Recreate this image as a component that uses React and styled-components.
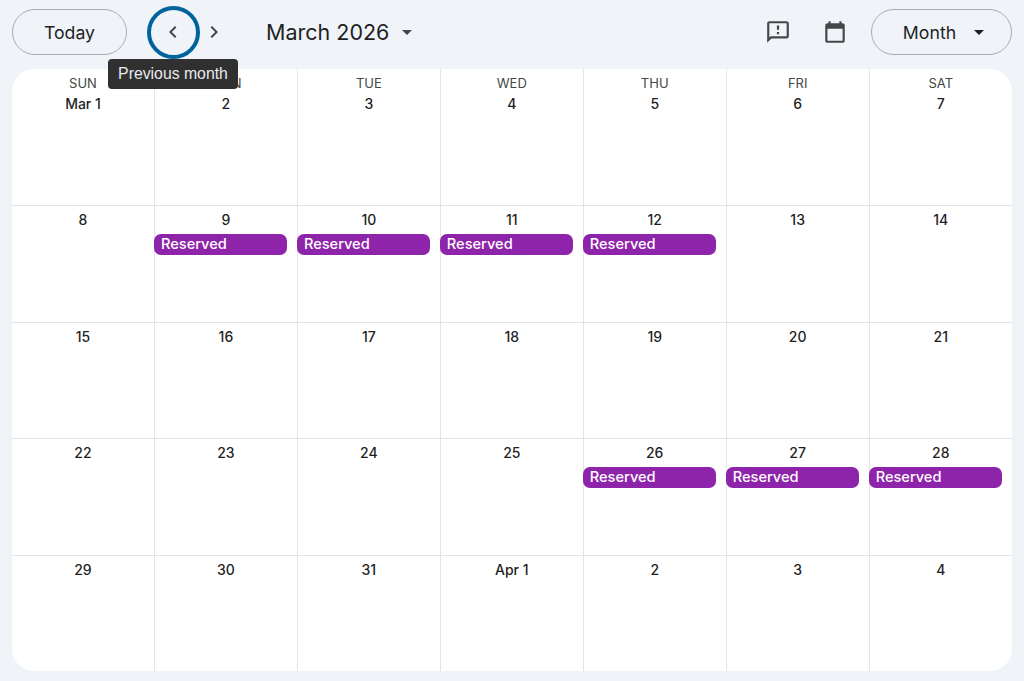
import styled, { createGlobalStyle } from "styled-components";

const WEEKDAYS = ["SUN", "MON", "TUE", "WED", "THU", "FRI", "SAT"];

const DAYS = [
  "Mar 1", "2", "3", "4", "5", "6", "7",
  "8", "9", "10", "11", "12", "13", "14",
  "15", "16", "17", "18", "19", "20", "21",
  "22", "23", "24", "25", "26", "27", "28",
  "29", "30", "31", "Apr 1", "2", "3", "4",
];

const RESERVED = [8, 9, 10, 11, 25, 26, 27];

const App = () => {
  return (
    <>
      <GlobalStyle />
      <Page>
        <Toolbar>
          <PillButton $width={115}>Today</PillButton>
          <NavGroup>
            <NavButton $focused aria-label="Previous month">
              <svg width="24" height="24" viewBox="0 0 24 24" fill="#444746">
                <path d="M15.4 7.4 14 6l-6 6 6 6 1.4-1.4-4.6-4.6z" />
              </svg>
              <Tooltip>Previous month</Tooltip>
            </NavButton>
            <NavButton aria-label="Next month">
              <svg width="24" height="24" viewBox="0 0 24 24" fill="#444746">
                <path d="M8.6 16.6 10 18l6-6-6-6-1.4 1.4 4.6 4.6z" />
              </svg>
            </NavButton>
          </NavGroup>
          <Title>
            March 2026
            <Caret $color="#444746" />
          </Title>
          <Spacer />
          <IconSlot>
            <svg width="26" height="26" viewBox="0 0 24 24" fill="#444746">
              <path d="M20 2H4c-1.1 0-2 .9-2 2v18l4-4h14c1.1 0 2-.9 2-2V4c0-1.100-.9-2-2-2zm0 14H5.170L4 17.170V4h16v12zM11 12h2v2h-2zm0-6h2v4h-2z" />
            </svg>
          </IconSlot>
          <IconSlot>
            <svg width="26" height="26" viewBox="0 0 24 24" fill="#444746">
              <path d="M19 4h-1V2h-2v2H8V2H6v2H5c-1.100 0-2 .9-2 2v14c0 1.100.9 2 2 2h14c1.100 0 2-.9 2-2V6c0-1.100-.9-2-2-2zm0 16H5V9h14v11z" />
            </svg>
          </IconSlot>
          <PillButton $width={141} $inset={4}>
            Month
            <Caret $color="#1f1f1f" $small />
          </PillButton>
        </Toolbar>
        <Calendar>
          {DAYS.map((day, i) => (
            <Cell key={i} $firstRow={i < 7}>
              {i < 7 && <Weekday>{WEEKDAYS[i]}</Weekday>}
              <DayNumber $firstRow={i < 7}>{day}</DayNumber>
              {RESERVED.includes(i) && <Reservation>Reserved</Reservation>}
            </Cell>
          ))}
        </Calendar>
      </Page>
    </>
  );
};

const GlobalStyle = createGlobalStyle`
  html, body {
    margin: 0;
    padding: 0;
    background: #f0f4f9;
  }
  body {
    font-family: Inter, Roboto, "Liberation Sans", sans-serif;
    color: #1f1f1f;
  }
  * {
    box-sizing: border-box;
  }
`;

const Page = styled.div`
  width: 1024px;
  height: 681px;
  padding: 0 12px;
  overflow: hidden;
`;

const Toolbar = styled.div`
  display: flex;
  align-items: center;
  height: 69px;
  padding-bottom: 5px;
`;

const PillButton = styled.button`
  display: flex;
  align-items: center;
  justify-content: center;
  gap: 18px;
  width: ${({ $width }) => $width}px;
  height: 46px;
  padding: 0 0 0 ${({ $inset }) => $inset || 0}px;
  background: transparent;
  border: 1px solid #a9acb0;
  border-radius: 23px;
  font-family: inherit;
  font-size: 17.700px;
  font-weight: 400;
  color: #1f1f1f;
`;

const NavGroup = styled.div`
  display: flex;
  gap: 1px;
  margin-left: 26px;
`;

const NavButton = styled.button`
  position: relative;
  display: flex;
  align-items: center;
  justify-content: center;
  width: 40px;
  height: 40px;
  padding: 0;
  background: transparent;
  border: none;

  ${({ $focused }) =>
    $focused &&
    `
    &::before {
      content: "";
      box-sizing: border-box;
      position: absolute;
      top: -6.5px;
      left: -6.5px;
      width: 53px;
      height: 53px;
      border: 4px solid #00639b;
      border-radius: 50%;
    }
  `}
`;

const Tooltip = styled.span`
  position: absolute;
  z-index: 2;
  top: 46.5px;
  left: -45px;
  width: 130px;
  height: 30px;
  background: #303030;
  border-radius: 4px;
  font-size: 15.800px;
  line-height: 30px;
  text-align: center;
  white-space: nowrap;
  color: #e8eaed;
`;

const Title = styled.div`
  display: flex;
  align-items: center;
  margin-left: 32px;
  font-size: 21.500px;
  color: #1f1f1f;
`;

const Caret = styled.span`
  width: 0;
  height: 0;
  margin-left: ${({ $small }) => ($small ? 0 : 13)}px;
  border-left: 5px solid transparent;
  border-right: 5px solid transparent;
  border-top: 5px solid ${({ $color }) => $color};
`;

const Spacer = styled.div`
  flex: 1;
`;

const IconSlot = styled.div`
  display: flex;
  align-items: center;
  justify-content: center;
  width: 40px;
  height: 40px;
  margin-right: 17px;

  &:last-of-type {
    margin-right: 16px;
  }
`;

const Calendar = styled.div`
  display: grid;
  grid-template-columns: repeat(6, 142.950px) 1fr;
  grid-template-rows: 137px 117px 116px 117px 115px;
  width: 1000px;
  background: #fff;
  border-radius: 22px;
  overflow: hidden;
`;

const Cell = styled.div`
  display: flex;
  flex-direction: column;
  align-items: center;
  padding-top: ${({ $firstRow }) => ($firstRow ? 6 : 4)}px;
  border-right: 1px solid #e2e6ec;
  border-bottom: 1px solid #e2e6ec;
  min-width: 0;

  &:nth-child(7n) {
    border-right: none;
  }
  &:nth-child(n + 29) {
    border-bottom: none;
  }
`;

const Weekday = styled.div`
  font-size: 13px;
  line-height: 16px;
  color: #444746;
`;

const DayNumber = styled.div`
  margin-top: ${({ $firstRow }) => ($firstRow ? 3 : 0)}px;
  font-size: 14px;
  font-weight: 500;
  line-height: 20px;
  color: #1f1f1f;
`;

const Reservation = styled.div`
  align-self: flex-start;
  flex-shrink: 0;
  width: 133px;
  height: 21px;
  margin-top: 4px;
  margin-left: -0.5px;
  padding-left: 6.500px;
  background: #8e24aa;
  border-radius: 7px;
  font-size: 14.600px;
  font-weight: 500;
  line-height: 20px;
  color: #fff;
`;

export default App;
